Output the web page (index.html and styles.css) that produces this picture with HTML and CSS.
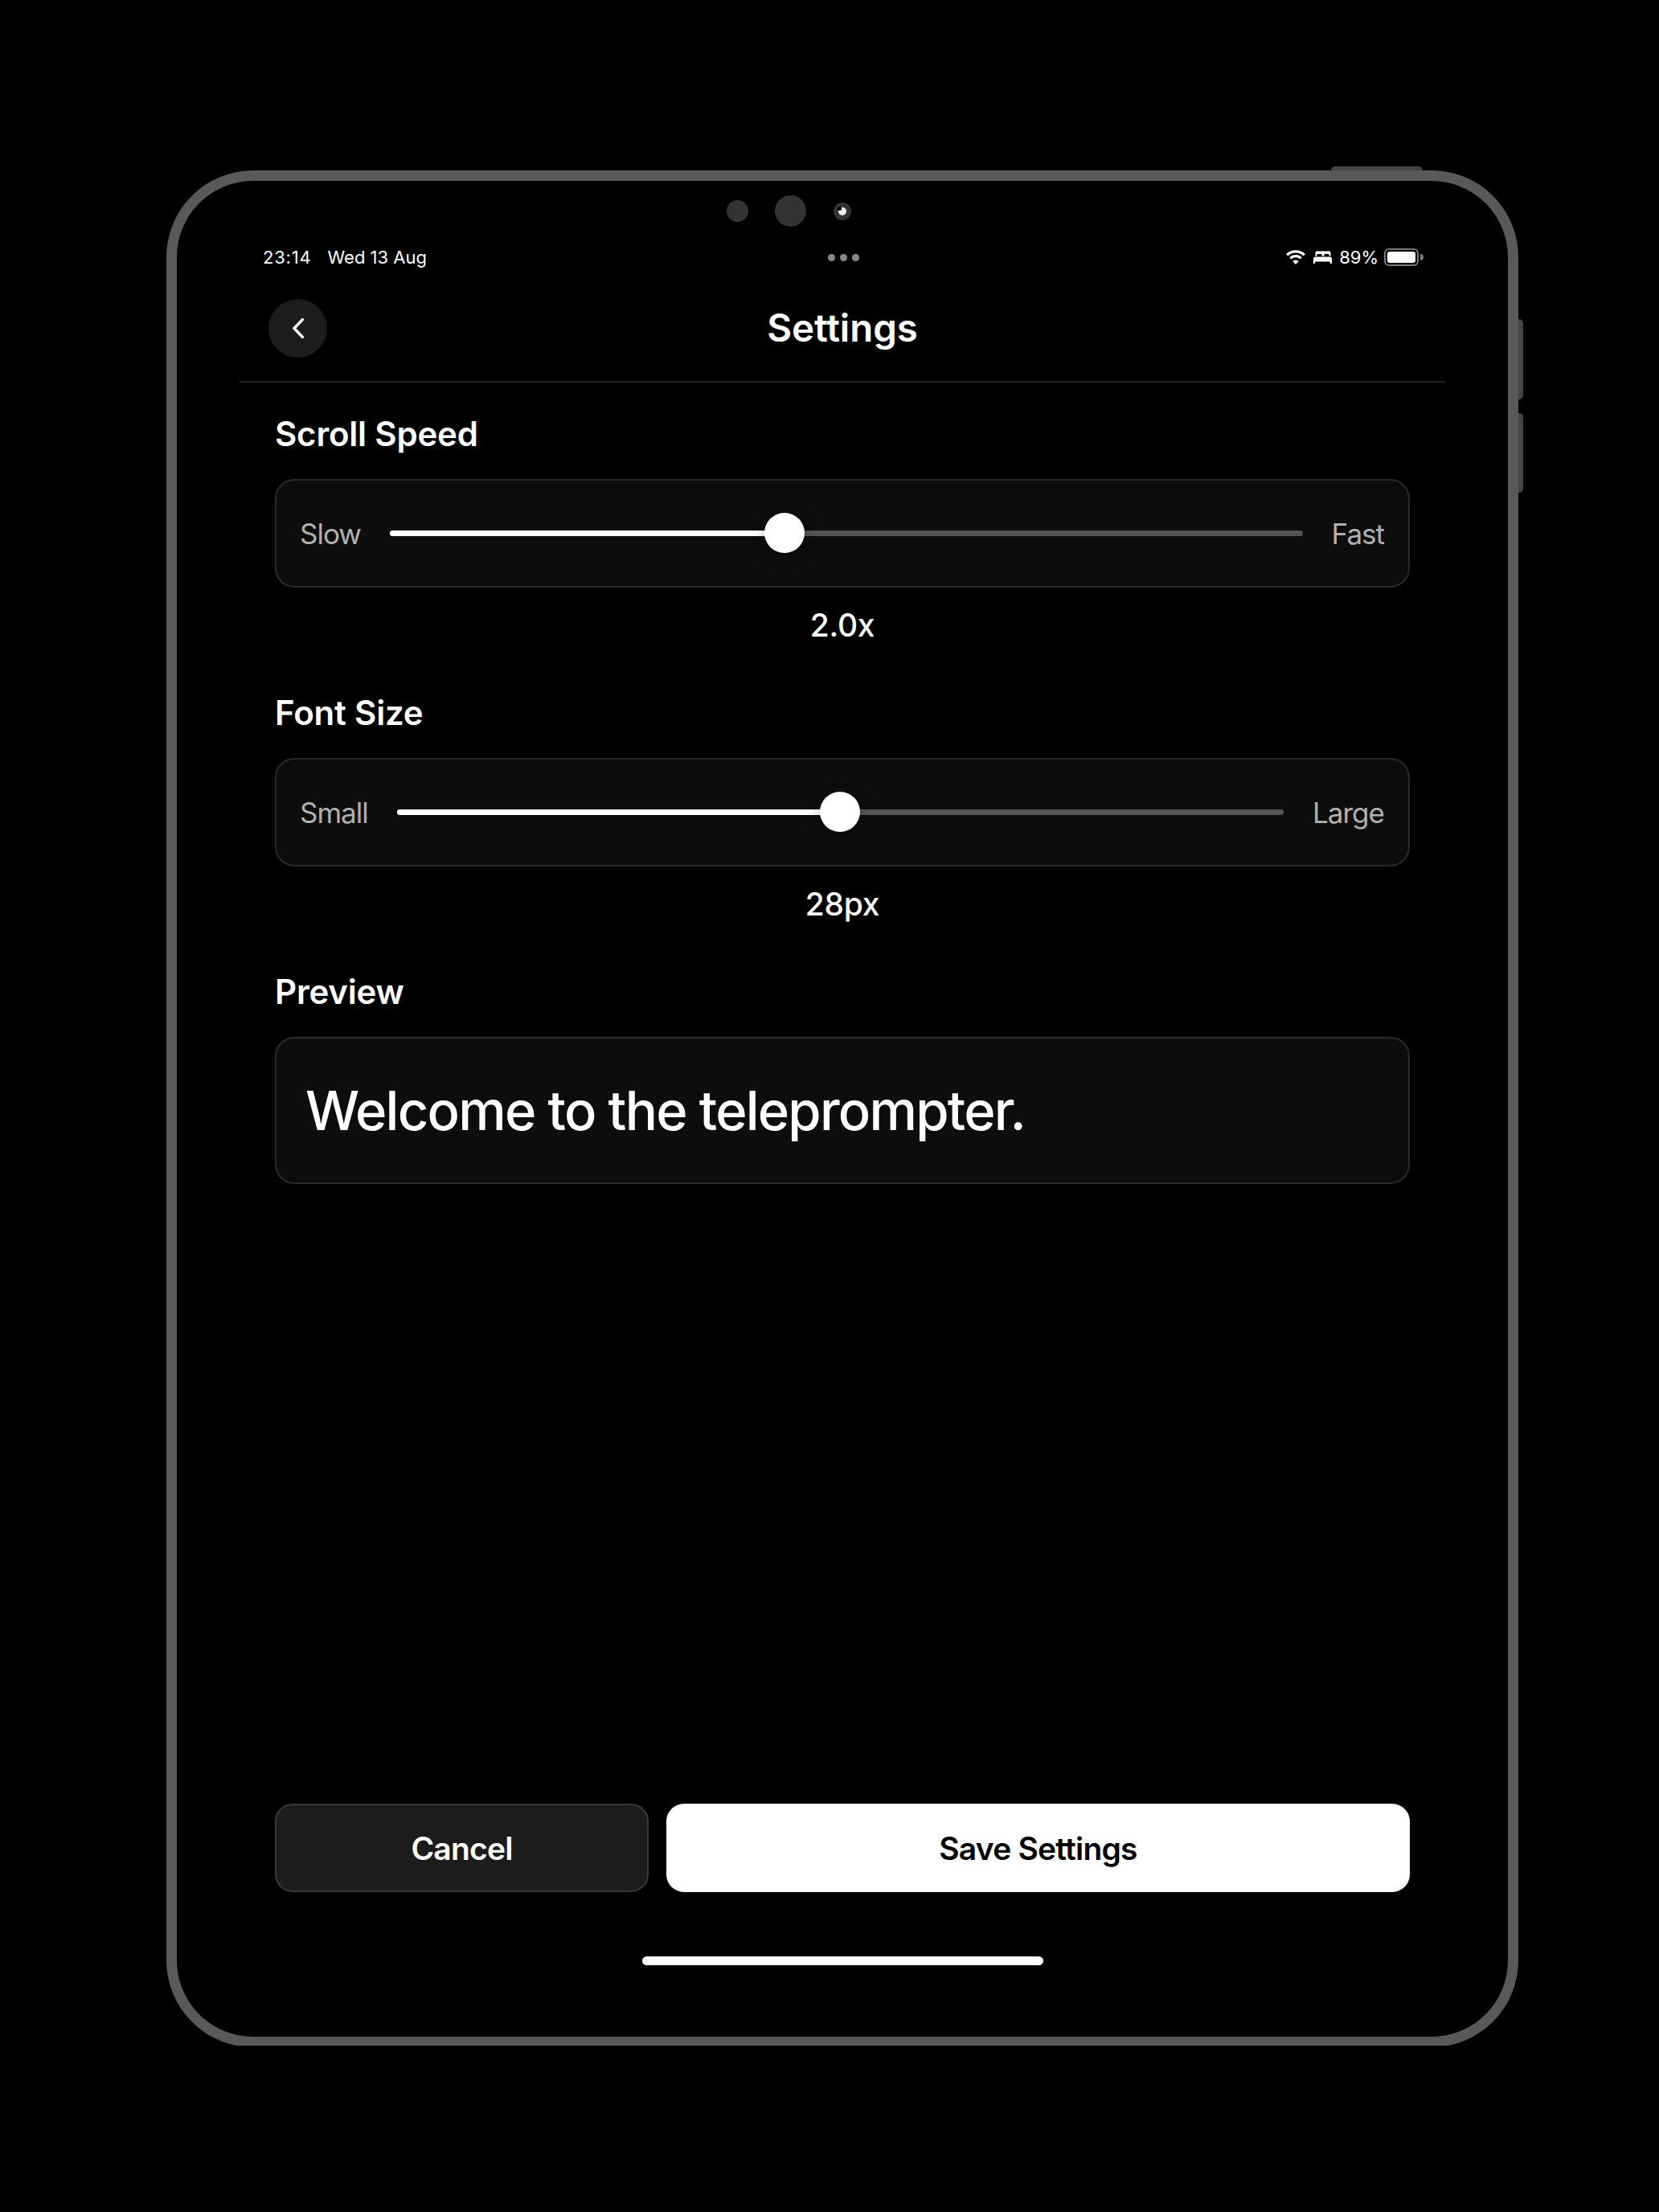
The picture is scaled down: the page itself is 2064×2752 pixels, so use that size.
FILE: index.html
```html
<!DOCTYPE html>
<html lang="en">
<head>
<meta charset="utf-8">
<title>Settings</title>
<link rel="stylesheet" href="styles.css">
</head>
<body>
<div class="stage">
  <div class="device">
    <span class="hw hw-top"></span>
    <span class="hw hw-side hw-side-a"></span>
    <span class="hw hw-side hw-side-b"></span>
    <div class="cameras">
      <span class="cam cam-a"></span>
      <span class="cam cam-b"></span>
      <span class="cam cam-c"><i class="lens"></i></span>
    </div>
    <div class="status">
      <div class="status-left"><span class="clock">23:14</span><span>Wed 13 Aug</span></div>
      <div class="status-dots"><i></i><i></i><i></i></div>
      <div class="status-right">
        <svg class="ic-wifi" viewBox="0 0 25 18" aria-hidden="true"><path class="arc" d="M1.700 6.300A15.200 15.200 0 0 1 23.300 6.300"/><path class="arc" d="M5.900 10.300A9.400 9.400 0 0 1 19.100 10.300"/><path d="M12.500 18l-3.800-4a5.300 5.300 0 0 1 7.600 0z"/></svg>
        <svg class="ic-bed" viewBox="0 0 23 16" aria-hidden="true"><path d="M3 0.500h17a1.500 1.500 0 0 1 1.500 1.500v4.500h-2v-1.500a1 1 0 0 0-1-1h-4a1 1 0 0 0-1 1v1.500h-3v-1.500a1 1 0 0 0-1-1h-4a1 1 0 0 0-1 1v1.500h-2v-4.500a1.500 1.500 0 0 1 1.500-1.500z"/><path d="M2.500 7.500h18a2.500 2.500 0 0 1 2.500 2.500v6h-2.200v-2.500h-18.600v2.500h-2.200v-6a2.500 2.500 0 0 1 2.500-2.500z"/></svg>
        <span class="pct">89%</span>
        <span class="battery"><i class="battery-fill"></i></span>
        <i class="battery-nub"></i>
      </div>
    </div>
    <header class="nav">
      <button class="back" type="button" aria-label="Back">
        <svg viewBox="0 0 14 25" aria-hidden="true"><path d="M12.500 1.500L2 12.500l10.500 11"/></svg>
      </button>
      <h1 class="title">Settings</h1>
      <span></span>
    </header>
    <main class="content">
      <section class="group">
        <h2 class="label">Scroll Speed</h2>
        <div class="card slider-card">
          <span class="end">Slow</span>
          <div class="track"><i class="fill" style="width:43.2%"></i><i class="thumb" style="left:43.2%"></i></div>
          <span class="end">Fast</span>
        </div>
        <p class="value">2.0x</p>
      </section>
      <section class="group">
        <h2 class="label">Font Size</h2>
        <div class="card slider-card">
          <span class="end">Small</span>
          <div class="track"><i class="fill" style="width:50%"></i><i class="thumb" style="left:50%"></i></div>
          <span class="end">Large</span>
        </div>
        <p class="value">28px</p>
      </section>
      <section class="group">
        <h2 class="label">Preview</h2>
        <div class="card preview">Welcome to the teleprompter.</div>
      </section>
      <div class="actions">
        <button class="btn btn-cancel" type="button">Cancel</button>
        <button class="btn btn-save" type="button">Save Settings</button>
      </div>
    </main>
    <div class="home"></div>
  </div>
</div>
</body>
</html>
```
FILE: styles.css
```css
* { box-sizing: border-box; }
html, body { margin: 0; padding: 0; background: #000; }
body { font-family: Inter, "Liberation Sans", sans-serif; color: #fff; }
.stage { height: 2545px; padding: 212px 0 0 207px; overflow: hidden; }
.device {
  position: relative;
  width: 1682px;
  height: 2335px;
  border: 13px solid #595959;
  border-radius: 108px;
  background: #000;
  display: flex;
  flex-direction: column;
}
.hw { position: absolute; background: #444; }
.hw-top { top: -18px; left: 1436px; width: 114px; height: 5px; border-radius: 5px 5px 0 0; }
.hw-side { left: 1669px; width: 6px; border-radius: 0 5px 5px 0; }
.hw-side-a { top: 172px; height: 100px; }
.hw-side-b { top: 289px; height: 99px; }

.cameras { display: flex; justify-content: center; align-items: center; height: 39px; margin-top: 18px; padding-right: 134px; }
.cam { display: block; border-radius: 50%; background: #333; }
.cam-a { width: 27px; height: 27px; margin-right: 33px; }
.cam-b { width: 39px; height: 39px; margin-right: 34px; }
.cam-c { width: 22px; height: 22px; position: relative; }
.lens { position: absolute; left: 6px; top: 6px; width: 10px; height: 10px; border-radius: 50%; background: #eee; }
.lens::after { content: ""; position: absolute; left: -1px; top: -1px; width: 5px; height: 5px; border-radius: 50%; background: #000; }

.status {
  display: grid;
  grid-template-columns: 1fr auto 1fr;
  align-items: center;
  height: 30px;
  margin-top: 23px;
  padding: 0 105px 0 107px;
  font-size: 22px;
  line-height: 30px;
}
.status-left { display: flex; gap: 20px; }
.clock { letter-spacing: 0.800px; }
.status-dots { display: flex; gap: 6px; }
.status-dots i { display: block; width: 9px; height: 9px; border-radius: 50%; background: #888; }
.status-right { display: flex; justify-content: flex-end; align-items: center; }
.ic-wifi { width: 26px; height: 18px; fill: #fff; margin-right: 9px; }
.ic-wifi .arc { fill: none; stroke: #fff; stroke-width: 3.200; }
.ic-bed { width: 23px; height: 16px; fill: #fff; margin-right: 9px; }
.pct { margin-right: 7px; }
.battery { display: block; width: 43px; height: 22px; border: 2px solid #777; border-radius: 6px; padding: 2px; }
.battery-fill { display: block; width: 100%; height: 100%; background: #fff; border-radius: 3px; }
.battery-nub { display: block; width: 4px; height: 8px; background: #777; border-radius: 0 4px 4px 0; margin-left: 2px; }

.nav {
  display: grid;
  grid-template-columns: 1fr auto 1fr;
  align-items: center;
  margin: 36.500px 78px 0;
  padding: 0 36px 29.500px 36px;
  border-bottom: 2px solid #222;
}
.back {
  width: 73px; height: 73px;
  border: 0; border-radius: 50%; padding: 0;
  background: #1c1c1c;
  display: flex; align-items: center; justify-content: center;
}
.back svg { width: 14px; height: 25px; fill: none; stroke: #fff; stroke-width: 3.400; stroke-linecap: round; stroke-linejoin: round; }
.title { margin: 0; font-size: 47.500px; line-height: 60px; font-weight: 600; text-align: center; letter-spacing: -0.100px; }

.content { flex: 1; display: flex; flex-direction: column; padding: 39px 122px 0; }
.group + .group { margin-top: 58px; }
.label { margin: 0 0 31px; font-size: 42px; line-height: 50px; font-weight: 600; letter-spacing: -0.200px; }
.card { background: #0d0d0d; border: 2px solid #2a2a2a; border-radius: 24px; }
.slider-card { display: flex; align-items: center; gap: 36px; height: 135px; padding: 0 30px 0 29px; }
.end { font-size: 35px; line-height: 44px; color: #b0b0b0; letter-spacing: -1px; }
.track { position: relative; flex: 1; height: 7px; border-radius: 4px; background: #555; }
.fill { position: absolute; left: 0; top: 0; bottom: 0; border-radius: 4px; background: #fff; }
.thumb { position: absolute; top: 50%; width: 50px; height: 50px; margin: -26px 0 0 -25px; border-radius: 50%; background: #fff; box-shadow: 0 4px 16px rgba(0,0,0,.3); }
.value { margin: 22px 0 1px; font-size: 39px; line-height: 50px; font-weight: 500; text-align: center; letter-spacing: -0.300px; }
.preview { height: 183px; padding: 0 36px; display: flex; align-items: center; font-size: 67px; font-weight: 500; letter-spacing: -1.800px; }

.actions { margin-top: auto; display: flex; gap: 22px; }
.btn { height: 110px; border-radius: 22px; font-family: inherit; font-size: 39px; font-weight: 600; letter-spacing: -0.800px; }
.btn-cancel { flex: 0 0 465px; background: #1c1c1c; border: 2px solid #3a3a3a; color: #fff; }
.btn-save { flex: 1; background: #fff; border: 0; color: #000; }
.home { align-self: center; width: 499px; height: 11px; margin: 80px 0 89px; border-radius: 6px; background: #fff; }
```
